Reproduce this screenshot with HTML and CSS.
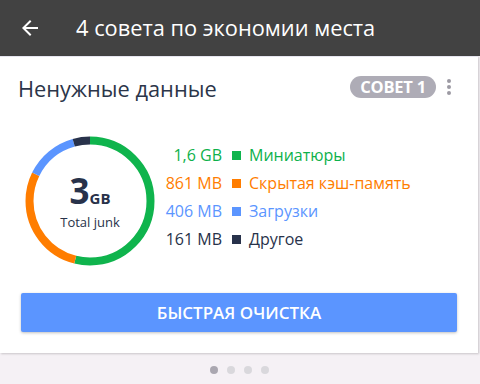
FILE: index.html
```html
<!DOCTYPE html>
<html lang="ru">
<head>
<meta charset="utf-8">
<link rel="stylesheet" href="styles.css">
</head>
<body>
<header class="appbar">
  <svg class="back" viewBox="0 0 24 24" width="24" height="24"><path d="M20 11H7.83l5.59-5.59L12 4l-8 8 8 8 1.41-1.41L7.83 13H20v-2z" fill="#fff"/></svg>
  <h1 class="appbar-title">4 совета по экономии места</h1>
</header>
<main class="page">
  <section class="card">
    <div class="card-head">
      <h2 class="card-title">Ненужные данные</h2>
      <span class="badge">СОВЕТ 1</span>
      <span class="kebab"><i></i><i></i><i></i></span>
    </div>
    <div class="card-body">
      <div class="donut">
        <svg class="ring" viewBox="0 0 130 130" width="130" height="130">
          <g transform="rotate(-90 65 65)" fill="none" stroke-width="8">
            <circle cx="65" cy="65" r="60.5" stroke="#0fb44d" stroke-dasharray="204.7 400" stroke-dashoffset="0"/>
            <circle cx="65" cy="65" r="60.5" stroke="#ff7d00" stroke-dasharray="107.6 400" stroke-dashoffset="-204.7"/>
            <circle cx="65" cy="65" r="60.5" stroke="#5b95ff" stroke-dasharray="50.7 400" stroke-dashoffset="-312.3"/>
            <circle cx="65" cy="65" r="60.5" stroke="#28324b" stroke-dasharray="17.2 400" stroke-dashoffset="-363"/>
          </g>
        </svg>
        <div class="donut-label">
          <div class="total"><span class="big">3</span><span class="unit">GB</span></div>
          <div class="caption">Total junk</div>
        </div>
      </div>
      <ul class="legend">
        <li class="row green"><span class="val">1,6 GB</span><span class="sq"></span><span class="name">Миниатюры</span></li>
        <li class="row orange"><span class="val">861 MB</span><span class="sq"></span><span class="name">Скрытая кэш-память</span></li>
        <li class="row blue"><span class="val">406 MB</span><span class="sq"></span><span class="name">Загрузки</span></li>
        <li class="row dark"><span class="val">161 MB</span><span class="sq"></span><span class="name">Другое</span></li>
      </ul>
    </div>
    <div class="card-foot">
      <button class="cta">БЫСТРАЯ ОЧИСТКА</button>
    </div>
  </section>
  <nav class="pager">
    <span class="dot active"></span><span class="dot"></span><span class="dot"></span><span class="dot"></span>
  </nav>
</main>
</body>
</html>
```

FILE: styles.css
```css
* { box-sizing: border-box; }
html, body { margin: 0; padding: 0; }
body {
  width: 480px;
  height: 384px;
  overflow: hidden;
  background: #f5f1f5;
  font-family: "Open Sans", "Noto Sans", sans-serif;
}
.appbar {
  height: 56px;
  background: #424242;
  display: flex;
  align-items: center;
}
.back { margin-left: 18px; flex: none; }
.appbar-title {
  margin: 0 0 0 34px;
  font-size: 21.8px;
  font-weight: 400;
  color: #fff;
  line-height: 28px;
}
.page { display: flex; flex-direction: column; }
.card {
  width: 478px;
  background: #fff;
  border-top: 1px solid #e6e5ef;
  box-shadow: 1px 1px 2px rgba(0,0,0,0.18);
  padding-bottom: 21px;
}
.card-head {
  display: flex;
  align-items: center;
  padding: 18px 0 0 18px;
  height: 46px;
}
.card-title {
  margin: 0;
  flex: 1;
  font-size: 21.8px;
  font-weight: 400;
  line-height: 28px;
  color: #2b3549;
}
.badge {
  background: #aeacb6;
  color: #fff;
  font-weight: 700;
  font-size: 16.5px;
  line-height: 22px;
  height: 22px;
  padding: 0 10px;
  border-radius: 11px;
  margin-top: -4px;
  letter-spacing: -0.2px;
}
.kebab {
  display: flex;
  flex-direction: column;
  gap: 2px;
  margin: -4px 27px 0 11px;
}
.kebab i { width: 4px; height: 4px; border-radius: 50%; background: #9c9aa3; display: block; }
.card-body {
  display: flex;
  align-items: flex-start;
  padding: 33px 0 0 25px;
}
.donut {
  display: grid;
  width: 130px;
  height: 130px;
}
.ring, .donut-label { grid-area: 1 / 1; }
.donut-label {
  display: flex;
  flex-direction: column;
  align-items: center;
  padding-top: 36px;
  color: #28324a;
}
.total { line-height: 38px; height: 38px; }
.big { font-size: 35px; font-weight: 700; }
.unit { font-size: 15px; font-weight: 700; }
.caption { font-size: 13px; line-height: 18px; margin-top: 3px; }
.legend {
  list-style: none;
  margin: 5px 0 0 5px;
  padding: 0;
  display: grid;
  grid-template-columns: 62px 9px auto;
  column-gap: 9px;
  font-size: 16px;
  line-height: 28px;
}
.row { display: contents; }
.val { text-align: right; }
.sq { width: 9px; height: 9px; align-self: center; margin-left: 1px; }
.green { color: #0db14b; }
.green .sq { background: #0fb44d; }
.orange { color: #ff7d00; }
.orange .sq { background: #ff7d00; }
.blue { color: #5b95ff; }
.blue .sq { background: #5b95ff; }
.dark { color: #28324a; }
.dark .sq { background: #28324b; }
.card-foot { padding: 27px 21px 0 21px; }
.cta {
  display: block;
  width: 436px;
  height: 39px;
  border: 0;
  border-radius: 2px;
  background: #5b95ff;
  color: #fff;
  font-family: "Open Sans", sans-serif;
  font-size: 17px;
  font-weight: 600;
  box-shadow: 0 1px 3px rgba(0,0,0,0.25);
}
.pager {
  display: flex;
  justify-content: center;
  gap: 9px;
  padding: 13px 0 0 0;
  margin-left: -2px;
}
.dot { width: 8px; height: 8px; border-radius: 50%; background: #d9d8dc; }
.dot.active { background: #aaa7b0; }
```
